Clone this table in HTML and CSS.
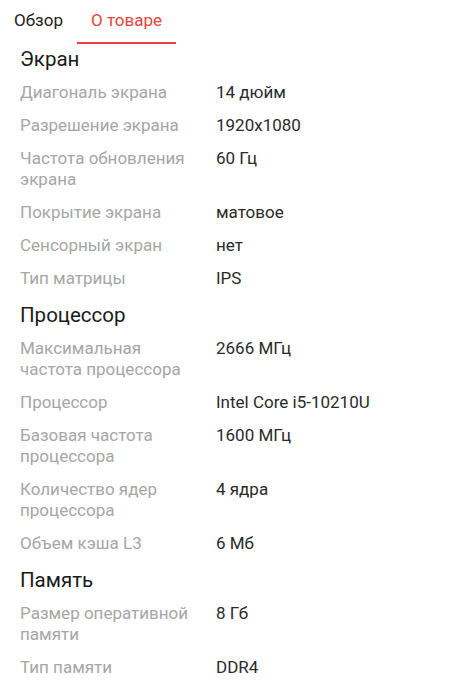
FILE: index.html
```html
<!DOCTYPE html>
<html lang="ru">
<head>
    <meta charset="UTF-8">
    <meta name="viewport" content="width=device-width, initial-scale=1.0">
    <title>О товаре</title>
    <link rel="stylesheet" href="styles.css">
</head>
<body>
    <div class="tabs">
        <div class="tab">Обзор</div>
        <div class="tab active">О товаре</div>
    </div>

    <div class="specs">
        <h2>Экран</h2>
        <div class="row"><div class="label">Диагональ экрана</div><div class="value">14 дюйм</div></div>
        <div class="row"><div class="label">Разрешение экрана</div><div class="value">1920x1080</div></div>
        <div class="row"><div class="label">Частота обновления экрана</div><div class="value">60 Гц</div></div>
        <div class="row"><div class="label">Покрытие экрана</div><div class="value">матовое</div></div>
        <div class="row"><div class="label">Сенсорный экран</div><div class="value">нет</div></div>
        <div class="row"><div class="label">Тип матрицы</div><div class="value">IPS</div></div>

        <h2>Процессор</h2>
        <div class="row"><div class="label">Максимальная частота процессора</div><div class="value">2666 МГц</div></div>
        <div class="row"><div class="label">Процессор</div><div class="value">Intel Core i5-10210U</div></div>
        <div class="row"><div class="label">Базовая частота процессора</div><div class="value">1600 МГц</div></div>
        <div class="row"><div class="label">Количество ядер процессора</div><div class="value">4 ядра</div></div>
        <div class="row"><div class="label">Объем кэша L3</div><div class="value">6 Мб</div></div>

        <h2>Память</h2>
        <div class="row"><div class="label">Размер оперативной памяти</div><div class="value">8 Гб</div></div>
        <div class="row"><div class="label">Тип памяти</div><div class="value">DDR4</div></div>
    </div>
</body>
</html>
```

FILE: styles.css
```css
body {
    margin: 0;
    font-family: Roboto, "Liberation Sans", sans-serif;
    background: #fff;
    color: #222;
}
.tabs {
    display: flex;
    height: 44px;
}
.tab {
    padding: 0 14px;
    line-height: 40px;
    font-size: 17px;
    color: #222;
    border-bottom: 2px solid transparent;
    box-sizing: border-box;
    height: 44px;
}
.tab.active {
    color: #e8433a;
    border-bottom-color: #e8433a;
}
.specs {
    padding: 0 20px;
}
h2 {
    margin: 0;
    font-size: 20.5px;
    font-weight: 400;
    line-height: 28px;
    padding: 6px 0 3px;
    color: #1a1a1a;
}
.specs h2:first-child {
    padding: 1px 0 3px;
}
.row {
    display: flex;
    padding: 6px 0;
    font-size: 17px;
    line-height: 21px;
}
.label {
    width: 172px;
    margin-right: 24px;
    color: #a6a6a6;
}
.value {
    color: #2a2a2a;
}
```
